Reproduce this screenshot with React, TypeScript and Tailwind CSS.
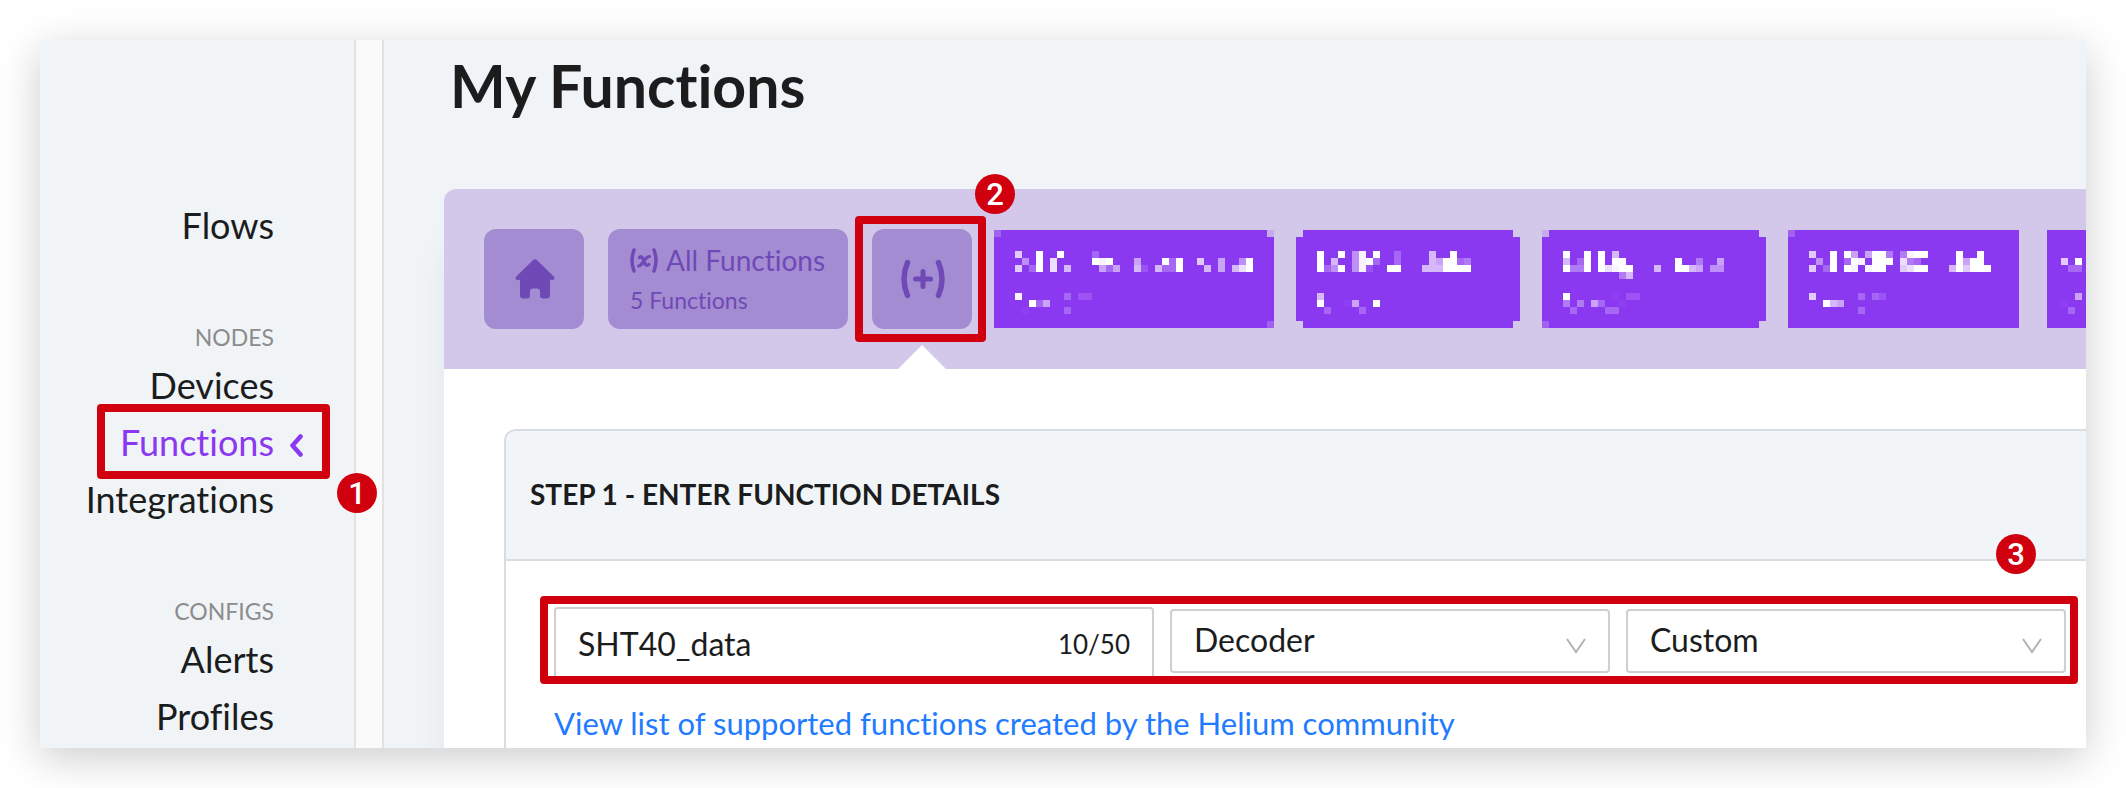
import type { ReactNode } from 'react';

interface MosaicTile {
  cols: number;
  // Opacity of the light cells, per row: "." is empty, 0-9 are tenths, "#" is solid
  cells: Record<number, string>;
  // Opacity of the header colour over the four corners: tl, tr, bl, br
  corners: [number, number, number, number];
}

const CELL = 7;
const TILE_ROWS = 14;

const tiles: MosaicTile[] = [
  {
    cols: 40,
    cells: {
      3: '...7..#..#....2.........................',
      4: '....4.#.8.....#9#...5...#2#..7..5..4#...',
      5: '...7.2#.8.6....525..61.622#...6.5.68#...',
      9: '...9......2.11..........................',
      10: '.....#25................................',
      11: '....0.....2.............................',
    },
    corners: [0.3, 0.8, 0, 0.3],
  },
  {
    cols: 32,
    cells: {
      3: '...#..#.49.#..2....6..#.........',
      4: '...#.6..49#2..2....65##23.......',
      5: '...#24#.491..##...666####.......',
      9: '...6............................',
      10: '...#...05..#....................',
      11: '....2....2......................',
    },
    corners: [1, 1, 1, 1],
  },
  {
    cols: 32,
    cells: {
      3: '...#..#.#.6.....................',
      4: '...6.2#.#.##.......#..3..5......',
      5: '...#33#.#89##...6..##65.44......',
      6: '...........36...................',
      9: '...#......0.11..................',
      10: '...3.3.52..0....................',
      11: '....2....22.....................',
    },
    corners: [0.8, 1, 0.3, 1],
  },
  {
    cols: 33,
    cells: {
      3: '...7..#.#5.5##3.39##....#..#.....',
      4: '....4.#.2#9.###.832.....#5##.....',
      5: '...7.2#.#9.9##..78##...6#7###....',
      9: '...7......2.21...................',
      10: '.....#65.........................',
      11: '..........2......................',
    },
    corners: [0.3, 0, 0, 0],
  },
  {
    cols: 33,
    cells: {
      4: '..7.#............................',
      5: '...22............................',
      9: '....5............................',
      10: '..0..............................',
      11: '...2.............................',
    },
    corners: [0, 0, 0, 0],
  },
];

function cellOpacity(value: string) {
  return value === '#' ? 1 : Number(value) / 10 + 0.04;
}

function Mosaic({ tile }: { tile: MosaicTile }) {
  const width = tile.cols * CELL;
  const height = TILE_ROWS * CELL;
  const [tl, tr, bl, br] = tile.corners;

  return (
    <svg width={width} height={height} shapeRendering="crispEdges" className="block">
      <rect width={width} height={height} fill="#8b38f1" />
      {Object.entries(tile.cells).map(([row, line]) =>
        line.split('').map((value, col) =>
          value === '.' ? null : (
            <rect
              key={`${row}-${col}`}
              x={col * CELL}
              y={Number(row) * CELL}
              width={CELL}
              height={CELL}
              fill="#fff"
              opacity={cellOpacity(value)}
            />
          )
        )
      )}
      <g fill="#d3c8ea">
        <rect width={CELL} height={CELL} opacity={tl} />
        <rect x={width - CELL} width={CELL} height={CELL} opacity={tr} />
        <rect y={height - CELL} width={CELL} height={CELL} opacity={bl} />
        <rect x={width - CELL} y={height - CELL} width={CELL} height={CELL} opacity={br} />
      </g>
    </svg>
  );
}

function HomeIcon() {
  return (
    <svg width="40" height="40" viewBox="0 0 40 40" fill="currentColor">
      <path d="M17.9 1.2Q20 -0.7 22.1 1.2L38.8 17.4Q40 18.8 39 20.3Q37.6 21.8 35.6 20.8L35 20.4V36Q35 39.5 31.5 39.5H28Q25 39.5 25 36.5V32.5Q25 29.5 22 29.5H18Q15 29.5 15 32.5V36.5Q15 39.5 12 39.5H8.500Q5 39.500 5 36V20.4L4.400 20.8Q2.400 21.800 1 20.300Q0 18.800 1.200 17.400Z" />
    </svg>
  );
}

function FunctionIcon() {
  return (
    <svg width="28" height="25" viewBox="0 0 28 25" fill="none" stroke="currentColor" strokeLinecap="round">
      <path d="M4 2Q0 12.500 4 23M24 2Q28 12.500 24 23" strokeWidth="3.500" />
      <path d="M9.500 9.500Q11.500 7.500 12.800 10.500L15 15.500Q16.300 18.500 19 16.500M19.500 8.500Q17 8.500 14 13T8.500 18" strokeWidth="3.200" />
    </svg>
  );
}

function AddFunctionIcon() {
  return (
    <svg width="44" height="40" viewBox="0 0 44 40" fill="none" stroke="currentColor" strokeLinecap="round">
      <path d="M6.500 3.500Q-0.500 20 6.500 36.500M37.500 3.500Q44.500 20 37.500 36.500" strokeWidth="5.500" />
      <path d="M14.500 20H29.500M22 12.500V27.500" strokeWidth="5" />
    </svg>
  );
}

function Badge({ className, children }: { className: string; children: ReactNode }) {
  return (
    <span
      className={`absolute z-10 flex size-10 items-center justify-center rounded-full bg-[#d0000e] font-[Roboto] text-[31px] leading-none font-medium text-white ${className}`}
    >
      {children}
    </span>
  );
}

function Highlight({ className }: { className: string }) {
  return <span className={`pointer-events-none absolute z-10 rounded-[4px] border-8 border-[#d0000e] ${className}`} />;
}

function NavLink({ children }: { children: ReactNode }) {
  return (
    <a href="#" className="block h-[57px]">
      {children}
    </a>
  );
}

function NavHeading({ children }: { children: ReactNode }) {
  return <h2 className="mt-[63px] h-10 text-[23px] leading-10 text-[#8c8c8c]">{children}</h2>;
}

function Sidebar() {
  return (
    <nav className="w-[314px] shrink-0 pt-[157px] pr-20 text-right text-[36px] leading-[57px] text-[#1b1c1d]">
      <NavLink>Flows</NavLink>
      <NavHeading>NODES</NavHeading>
      <NavLink>Devices</NavLink>
      <div className="relative">
        <a href="#" className="block h-[57px] text-[#8b38f1]">
          Functions
          <svg
            width="13"
            height="23"
            viewBox="0 0 13 23"
            fill="none"
            stroke="currentColor"
            strokeWidth="4.5"
            strokeLinecap="round"
            strokeLinejoin="round"
            className="absolute top-5 left-full ml-4"
          >
            <path d="M10.500 2.500L2.500 11.500L10.500 20.500" />
          </svg>
        </a>
        <Highlight className="-top-[10px] -right-14 -bottom-2 left-[57px]" />
        <Badge className="top-[59px] -right-[103px]">1</Badge>
      </div>
      <NavLink>Integrations</NavLink>
      <NavHeading>CONFIGS</NavHeading>
      <NavLink>Alerts</NavLink>
      <NavLink>Profiles</NavLink>
    </nav>
  );
}

function FunctionTabs() {
  return (
    <div className="flex h-[180px] items-center rounded-tl-xl bg-[#d3c8ea] pl-10 text-[#6f49b6]">
      <button aria-label="Home" className="flex size-[100px] shrink-0 items-center justify-center rounded-xl bg-[#a38cd2] pl-0.5">
        <HomeIcon />
      </button>
      <button className="ml-6 h-[100px] w-[240px] shrink-0 rounded-xl bg-[#a38cd2] pt-0.5 pl-[22px] text-left">
        <span className="flex items-center gap-2 text-[28px] leading-10 whitespace-nowrap">
          <FunctionIcon />
          All Functions
        </span>
        <span className="block text-[23px] leading-10">5 Functions</span>
      </button>
      <div className="relative ml-6 shrink-0">
        <button aria-label="Add function" className="flex size-[100px] items-center justify-center rounded-xl bg-[#a38cd2] pl-0.5">
          <AddFunctionIcon />
        </button>
        <Highlight className="-top-[13px] -right-[14px] -bottom-[13px] -left-[17px]" />
        <Badge className="-top-[55px] -right-[43px]">2</Badge>
        <svg width="48" height="24" viewBox="0 0 48 24" className="absolute top-[116px] left-[26px]">
          <path d="M0 24L24 0L48 24Z" fill="#fff" />
        </svg>
      </div>
      <div className="ml-[22px] flex gap-[22px]">
        {tiles.map((tile, index) => (
          <button key={index} aria-label={`Function ${index + 1}`} className="shrink-0 last:ml-1.5">
            <Mosaic tile={tile} />
          </button>
        ))}
      </div>
    </div>
  );
}

function SelectField({ label, value }: { label: string; value: string }) {
  return (
    <div className="relative py-0.5">
      <select
        aria-label={label}
        defaultValue={value}
        className="block h-16 w-full appearance-none rounded-[4px] border-2 border-[#cfcfcf] bg-white pr-16 pb-0.5 pl-[22px] text-[32px] text-[#1b1c1d]"
      >
        <option>{value}</option>
      </select>
      <svg
        width="20"
        height="16"
        viewBox="0 0 20 16"
        fill="none"
        stroke="#b3b3b3"
        strokeWidth="2"
        className="pointer-events-none absolute top-[31px] right-6"
      >
        <path d="M1 1L10 14L19 1" />
      </svg>
    </div>
  );
}

function StepCard() {
  return (
    <section className="rounded-tl-xl border-t-2 border-l-2 border-[#d9dde1]">
      <h2 className="h-[130px] rounded-tl-xl border-b-2 border-[#d9dde1] bg-[#f1f5f8] pl-6 text-[28px] leading-[126px] font-bold text-[#1b1c1d]">
        STEP 1 - ENTER FUNCTION DETAILS
      </h2>
      <div className="pt-[46px] pr-5 pl-12">
        <div className="relative grid grid-cols-[15fr_11fr_11fr] gap-4">
          <div className="relative">
            <input
              aria-label="Function name"
              defaultValue="SHT40_data"
              className="block h-[72px] w-full rounded-[4px] border-2 border-[#cfcfcf] bg-white pr-28 pl-[22px] text-[32px] text-[#1b1c1d]"
            />
            <span className="absolute top-0 right-6 text-[26px] leading-[74px] text-[#1b1c1d]">10/50</span>
          </div>
          <SelectField label="Function type" value="Decoder" />
          <SelectField label="Function format" value="Custom" />
          <Highlight className="-top-[11px] -right-3 -bottom-[5px] -left-[14px]" />
          <Badge className="-top-[73px] right-[30px]">3</Badge>
        </div>
        <a href="#" className="mt-5 block text-[31px] leading-[49px] text-[#1f7bff]">
          View list of supported functions created by the Helium community
        </a>
      </div>
    </section>
  );
}

export default function App() {
  return (
    <div className="bg-white p-10 font-[Lato,sans-serif] [font-variant-ligatures:none]">
      <div className="shadow-[0_10px_40px_rgba(0,0,0,0.2)]">
        <div className="flex overflow-hidden bg-[#f0f4f7]">
          <Sidebar />
          <div className="w-[30px] shrink-0 border-x-2 border-[#e2e2e2] bg-[#fafafa]" />
          <main className="flex min-w-0 flex-1 flex-col pl-[60px]">
            <h1 className="pt-1.5 pb-[63px] pl-1.5 text-[59px] leading-[80px] font-bold text-[#1b1c1b]">My Functions</h1>
            <div className="flex-1 rounded-tl-xl bg-white shadow-[0_48px_40px_-12px_rgba(0,0,0,0.1)]">
              <FunctionTabs />
              <div className="pt-[60px] pl-[60px]">
                <StepCard />
              </div>
            </div>
          </main>
        </div>
      </div>
    </div>
  );
}
